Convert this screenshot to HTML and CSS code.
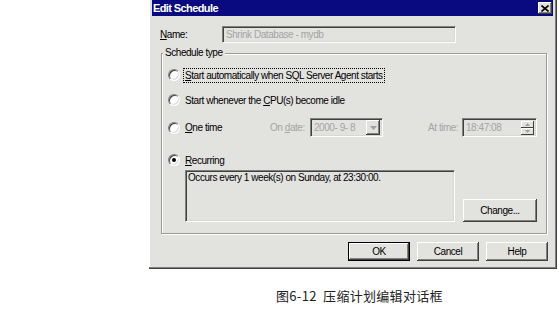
FILE: index.html
```html
<!DOCTYPE html>
<html lang="en">
<head>
    <meta charset="UTF-8">
    <title>Edit Schedule</title>
    <link rel="stylesheet" href="styles.css">
</head>
<body>
    <div class="page">
        <div class="dialog">
            <div class="titlebar">
                <span class="title">Edit Schedule</span>
                <span class="close">
                    <svg width="8" height="7" viewBox="0 0 8 7">
                        <path d="M0.5 0.5 L7.5 6.5 M7.5 0.5 L0.5 6.5" stroke="#000" stroke-width="1.6" fill="none"/>
                    </svg>
                </span>
            </div>

            <div class="name-row">
                <span class="name-label"><u>N</u>ame:</span>
                <div class="field name-field disabled">Shrink Database - mydb</div>
            </div>

            <div class="group">
                <div class="legend">Schedule type</div>

                <div class="opt opt-auto">
                    <span class="radio"></span>
                    <span class="focus"><u>S</u>tart automatically when SQL Server Agent starts</span>
                </div>

                <div class="opt opt-idle">
                    <span class="radio"></span>
                    <span>Start whenever the <u>C</u>PU(s) become idle</span>
                </div>

                <div class="opt opt-once">
                    <span class="radio"></span>
                    <span class="once-label"><u>O</u>ne time</span>
                    <span class="disabled date-label">On <u>d</u>ate:</span>
                    <div class="field combo disabled">
                        <span>2000- 9- 8</span>
                        <span class="drop">
                            <svg width="7" height="4" viewBox="0 0 7 4"><path d="M0 0 H7 L3.5 4 Z" fill="#a0a0a0"/></svg>
                        </span>
                    </div>
                    <span class="disabled time-label">At time:</span>
                    <div class="field timebox disabled">
                        <span>18:47:08</span>
                        <span class="spin">
                            <span class="spin-btn"><svg width="5" height="3" viewBox="0 0 5 3"><path d="M0 3 H5 L2.5 0 Z" fill="#a0a0a0"/></svg></span>
                            <span class="spin-btn"><svg width="5" height="3" viewBox="0 0 5 3"><path d="M0 0 H5 L2.5 3 Z" fill="#a0a0a0"/></svg></span>
                        </span>
                    </div>
                </div>

                <div class="opt opt-recur">
                    <span class="radio checked"></span>
                    <span><u>R</u>ecurring</span>
                </div>

                <div class="summary-row">
                    <div class="field summary">Occurs every 1 week(s) on Sunday, at 23:30:00.</div>
                    <button class="btn change">Chan<u>g</u>e...</button>
                </div>
            </div>

            <div class="actions">
                <button class="btn default">OK</button>
                <button class="btn">Cancel</button>
                <button class="btn">Help</button>
            </div>
        </div>

        <p class="caption">图6-12&nbsp; 压缩计划编辑对话框</p>
    </div>
</body>
</html>
```

FILE: styles.css
```css
body {
    margin: 0;
    background: #fff;
    font-family: "Liberation Sans", Arial, sans-serif;
    font-size: 10px;
    letter-spacing: -0.45px;
    color: #000;
}
.page {
    padding-left: 149px;
}
.dialog {
    box-sizing: border-box;
    width: 408px;
    height: 269px;
    padding: 0 3px;
    background: #e2e2df;
    border-right: 1px solid #404040;
    border-bottom: 1px solid #404040;
    box-shadow: inset -1px -1px #808080, inset 1px 0 #fff;
}
.titlebar {
    height: 16px;
    display: flex;
    align-items: center;
    justify-content: space-between;
    padding: 0 1px;
    background: #0a0a80;
}
.title {
    color: #fff;
    font-weight: bold;
    font-size: 11px;
    letter-spacing: -0.6px;
}
.close {
    box-sizing: border-box;
    width: 14px;
    height: 12px;
    display: flex;
    align-items: center;
    justify-content: center;
    background: #e2e2df;
    box-shadow: inset -1px -1px #404040, inset 1px 1px #fff, inset -2px -2px #808080;
}
.disabled {
    color: #a4a4a4;
}
.field {
    box-sizing: border-box;
    display: flex;
    align-items: center;
    border: 1px solid;
    border-color: #808080 #fff #fff #808080;
    box-shadow: inset 1px 1px #404040, inset -1px -1px #d8d8d4;
    background: #e2e2df;
}
.name-row {
    display: flex;
    align-items: center;
    margin: 10px 0 0 8px;
    height: 17px;
}
.name-label {
    width: 62px;
}
.name-field {
    width: 234px;
    height: 17px;
    padding-left: 3px;
}
.group {
    margin: 10px 6px 0 9px;
    padding: 0 9px 11px 6px;
    border: 1px solid #9a9a9a;
    box-shadow: 1px 1px 0 #fff, inset 1px 1px 0 #fff;
}
.legend {
    display: table;
    margin: -7px 0 0 -5px;
    padding: 0 2px;
    line-height: 12px;
    background: #e2e2df;
}
.opt {
    display: flex;
    align-items: center;
    height: 14px;
}
.opt-auto {
    margin-top: 9px;
}
.opt-idle {
    margin-top: 11px;
}
.opt-once {
    margin-top: 11px;
    height: 19px;
}
.opt-recur {
    margin-top: 16px;
}
.radio {
    box-sizing: border-box;
    width: 12px;
    height: 12px;
    margin-right: 5px;
    display: flex;
    align-items: center;
    justify-content: center;
    border-radius: 50%;
    border: 1px solid;
    border-color: #808080 #fff #fff #808080;
    box-shadow: inset 1px 1px #404040, inset -1px -1px #d8d8d4;
    background: #fff;
}
.radio.checked::after {
    content: "";
    width: 4px;
    height: 4px;
    border-radius: 50%;
    background: #000;
}
.focus {
    outline: 1px dotted #000;
    outline-offset: 1px;
    line-height: 11px;
}
.once-label {
    width: 85px;
}
.date-label {
    width: 40px;
}
.combo {
    width: 73px;
    height: 19px;
    padding: 0 2px 0 3px;
    justify-content: space-between;
}
.drop {
    box-sizing: border-box;
    width: 14px;
    height: 15px;
    display: flex;
    align-items: center;
    justify-content: center;
    background: #e2e2df;
    box-shadow: inset -1px -1px #404040, inset 1px 1px #fff, inset -2px -2px #808080;
}
.time-label {
    margin-left: 45px;
    width: 34px;
}
.timebox {
    width: 75px;
    height: 19px;
    padding: 0 2px 0 3px;
    justify-content: space-between;
}
.spin {
    display: flex;
    flex-direction: column;
}
.spin-btn {
    box-sizing: border-box;
    width: 13px;
    height: 7px;
    display: flex;
    align-items: center;
    justify-content: center;
    background: #e2e2df;
    box-shadow: inset -1px -1px #404040, inset 1px 1px #fff;
}
.summary-row {
    display: flex;
    align-items: flex-end;
    justify-content: space-between;
    margin: 3px 0 0 17px;
}
.summary {
    width: 270px;
    height: 52px;
    align-items: flex-start;
    padding: 1px 2px;
    line-height: 12px;
}
.btn {
    box-sizing: border-box;
    width: 62px;
    height: 19px;
    padding: 0;
    border: none;
    font: inherit;
    letter-spacing: inherit;
    color: #000;
    background: #e2e2df;
    box-shadow: inset -1px -1px #404040, inset 1px 1px #fff, inset -2px -2px #808080;
}
.change {
    width: 74px;
    height: 23px;
}
.btn.default {
    border: 1px solid #000;
}
.actions {
    display: flex;
    justify-content: flex-end;
    gap: 7px;
    margin: 8px 5px 0 0;
}
.caption {
    margin: 19px 0 0;
    padding-left: 127px;
    font-family: "Noto Sans CJK SC", "Liberation Sans", sans-serif;
    font-size: 13px;
    letter-spacing: 0.3px;
    line-height: 16px;
    color: #222;
}
```
